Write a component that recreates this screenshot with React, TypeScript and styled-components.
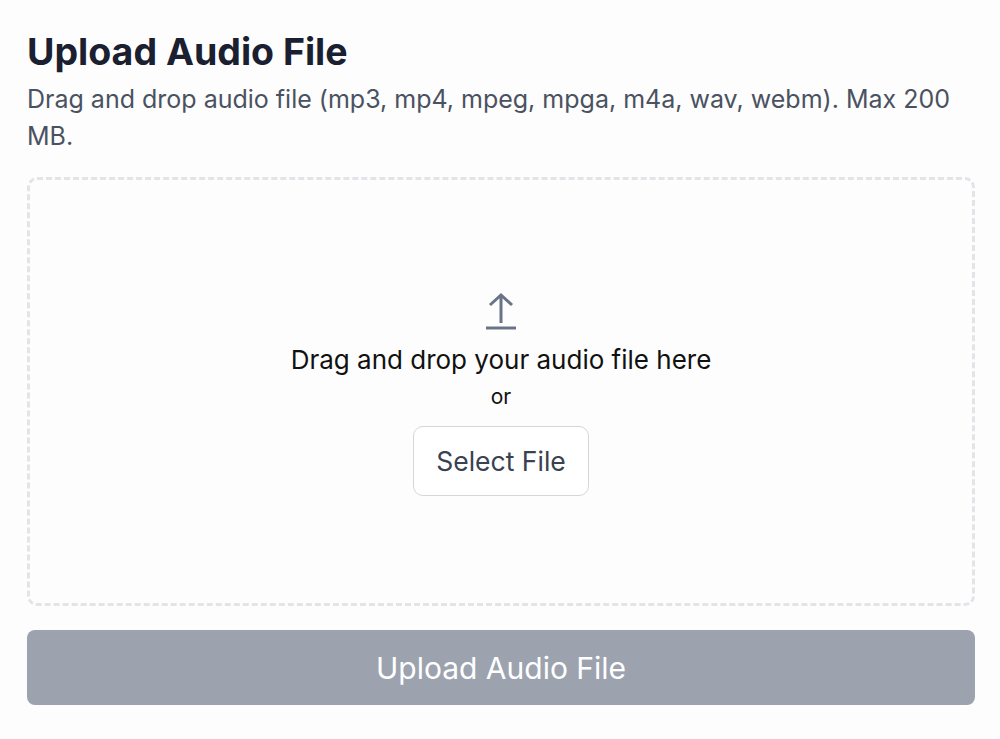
import styled, { createGlobalStyle } from "styled-components";

const Global = createGlobalStyle`
  body { margin: 0; background: #fdfdfd; font-family: Inter, "Noto Sans", sans-serif; }
`;

const Page = styled.div`
  padding: 28px 25px 0 27px;
  display: flex;
  flex-direction: column;
`;

const Title = styled.h1`
  margin: 0;
  font-size: 37.5px;
  font-weight: 700;
  color: #1a2030;
  line-height: 48px;
`;

const Desc = styled.p`
  margin: 5px 0 0;
  font-size: 25px;
  line-height: 37px;
  color: #4a5261;
`;

const Drop = styled.div`
  box-sizing: border-box;
  margin-top: 22px;
  height: 429px;
  border: 3px dashed #e2e4e8;
  border-radius: 10px;
  display: flex;
  flex-direction: column;
  align-items: center;
  justify-content: center;
  padding-top: 4px;
`;

const Main = styled.div`
  margin-top: 14px;
  font-size: 26px;
  color: #111;
`;

const Or = styled.div`
  margin-top: 9px;
  font-size: 21px;
  color: #111;
`;

const SelectBtn = styled.button`
  margin-top: 17px;
  width: 176px;
  height: 70px;
  border: 1.5px solid #d4d6da;
  border-radius: 10px;
  background: #fff;
  font-family: inherit;
  font-size: 26.5px;
  color: #3a4150;
`;

const UploadBtn = styled.button`
  margin-top: 24px;
  height: 75px;
  border: none;
  border-radius: 8px;
  background: #9ca3af;
  color: #fff;
  font-family: inherit;
  font-size: 30px;
`;

export default function App() {
  return (
    <Page>
      <Global />
      <Title>Upload Audio File</Title>
      <Desc>Drag and drop audio file (mp3, mp4, mpeg, mpga, m4a, wav, webm). Max 200 MB.</Desc>
      <Drop>
        <svg width="34" height="38" viewBox="0 0 34 38" fill="none" stroke="#6b7388" strokeWidth="3">
          <path d="M17 31V3M6 13L17 3l11 10" />
          <path d="M2 36h30" />
        </svg>
        <Main>Drag and drop your audio file here</Main>
        <Or>or</Or>
        <SelectBtn>Select File</SelectBtn>
      </Drop>
      <UploadBtn>Upload Audio File</UploadBtn>
    </Page>
  );
}
